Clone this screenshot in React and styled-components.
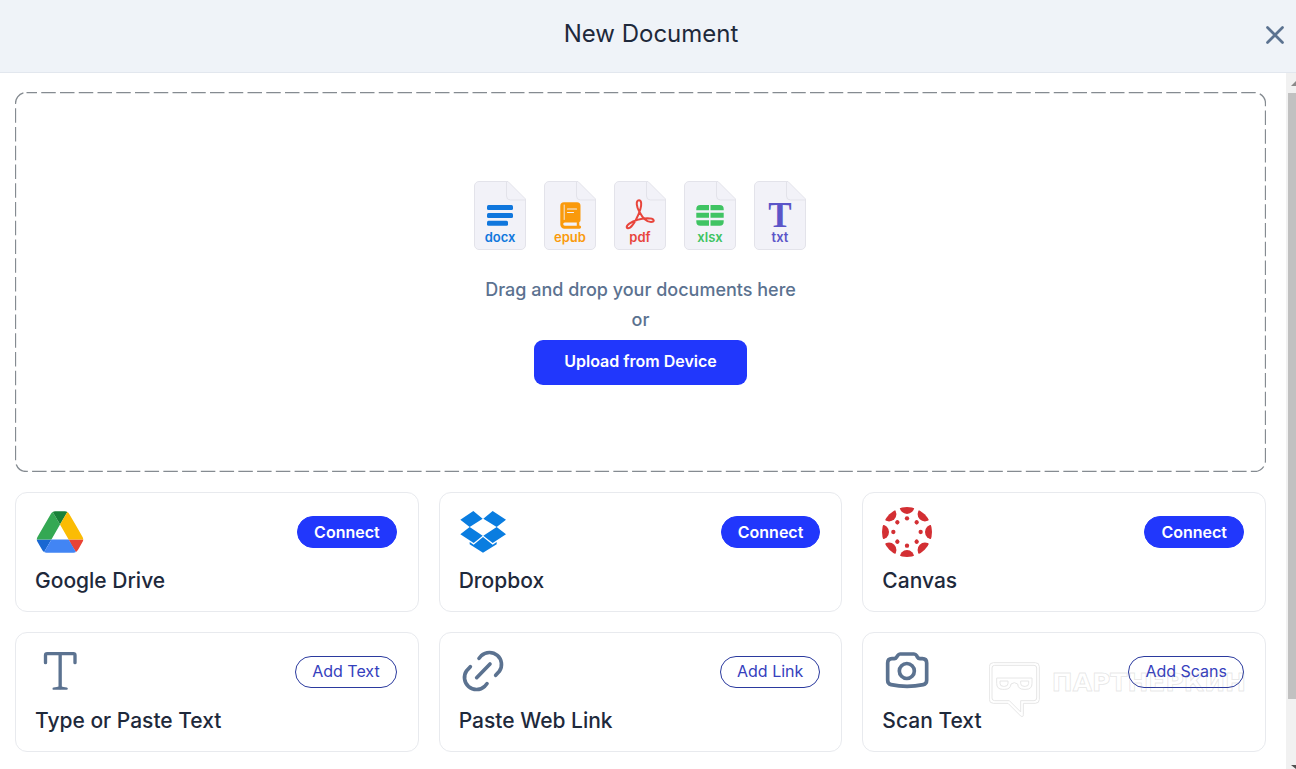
import React from 'react'
import styled, { createGlobalStyle } from 'styled-components';

const fileTypes = [
    { name: 'docx', color: '#1077dd', Glyph: DocxGlyph },
    { name: 'epub', color: '#fa9a0c', Glyph: EpubGlyph },
    { name: 'pdf', color: '#e8453c', Glyph: PdfGlyph },
    { name: 'xlsx', color: '#40c463', Glyph: XlsxGlyph },
    { name: 'txt', color: '#5b55c8', Glyph: TxtGlyph },
];

const sources = [
    { title: 'Google Drive', action: 'Connect', filled: true, Icon: DriveIcon },
    { title: 'Dropbox', action: 'Connect', filled: true, Icon: DropboxIcon },
    { title: 'Canvas', action: 'Connect', filled: true, Icon: CanvasIcon },
    { title: 'Type or Paste Text', action: 'Add Text', Icon: TypeIcon },
    { title: 'Paste Web Link', action: 'Add Link', Icon: LinkIcon },
    { title: 'Scan Text', action: 'Add Scans', Icon: CameraIcon },
];

function DocxGlyph() {
    return (
        <g fill="currentColor">
            <rect x="13" y="24" width="26" height="5" rx="1.5" />
            <rect x="13" y="32" width="26" height="5" rx="1.5" />
            <rect x="13" y="39.8" width="21" height="5" rx="1.5" />
        </g>
    )
}

function EpubGlyph() {
    return (
        <g>
            <path
                fill="currentColor"
                fillRule="evenodd"
                d="M20 21.3h13a3.5 3.5 0 0 1 3.5 3.5v14.4a2 2 0 0 1-1.2 1.9v3.4h.2a1.3 1.3 0 0 1 0 3.2H20.5a4.2 4.2 0 0 1-4.2-4.2V25a3.7 3.7 0 0 1 3.7-3.7zM20.8 41.5a1.6 1.6 0 0 0 0 3.2h12v-3.2z"
            />
            <path d="M20.200 24v14.500" stroke="#f2f1f8" strokeWidth="0.9" strokeLinecap="round" />
            <path d="M23.500 28h9M23.500 31.500h6" stroke="#f2f1f8" strokeWidth="1.2" strokeLinecap="round" />
        </g>
    )
}

function PdfGlyph() {
    return (
        <g transform="scale(0.3333) translate(-462 -33)">
            <path
                fill="none"
                stroke="currentColor"
                strokeWidth="6"
                strokeLinejoin="round"
                d="M537 91C526 91 530 112 538 125C546 140 560 156 573 156C586 156 585 145 562 145C545 146 520 153 508 161C496 169 499 179 510 173C522 164 536 135 541 118C545 104 545 91 537 91Z"
            />
        </g>
    )
}

function XlsxGlyph() {
    return (
        <g fill="currentColor">
            <path d="M16.3 24H25v5.3H12.3V28a4 4 0 0 1 4-4zM26.5 24h9.2a4 4 0 0 1 4 4v1.3H26.5z" />
            <path d="M12.3 31.8H25v5H12.3zM26.5 31.8h13.2v5H26.5z" />
            <path d="M12.3 39.3H25v5.4h-8.7a4 4 0 0 1-4-4zM26.5 39.3h13.2v1.4a4 4 0 0 1-4 4h-9.2z" />
        </g>
    )
}

function TxtGlyph() {
    return (
        <text x="26" y="46" textAnchor="middle" fill="currentColor" fontFamily="'Liberation Serif', serif" fontWeight="700" fontSize="35">T</text>
    )
}

function DriveIcon() {
    return (
        <svg width="50" height="50" viewBox="-3.4 -8 94 94" aria-hidden="true">
            <path fill="#1967d2" d="m6.6 66.85 3.85 6.65c.8 1.4 1.95 2.5 3.3 3.3l13.75-23.8H0c0 1.55.4 3.1 1.2 4.5z" />
            <path fill="#34a853" d="M43.65 25 29.9 1.2c-1.35.8-2.5 1.9-3.3 3.3l-25.4 44A9.06 9.06 0 0 0 0 53h27.5z" />
            <path fill="#ea4335" d="M73.55 76.8c1.35-.8 2.5-1.9 3.3-3.3l1.6-2.75L86.1 57.5c.8-1.4 1.2-2.95 1.2-4.5H59.8l5.85 11.5z" />
            <path fill="#188038" d="M43.65 25 57.4 1.2C56.05.4 54.5 0 52.9 0H34.4c-1.6 0-3.15.45-4.5 1.2z" />
            <path fill="#4285f4" d="M59.8 53H27.5L13.75 76.8c1.35.8 2.9 1.2 4.5 1.2h50.8c1.6 0 3.15-.45 4.5-1.2z" />
            <path fill="#fbbc04" d="m73.4 26.5-12.7-22c-.8-1.4-1.95-2.5-3.3-3.3L43.65 25 59.8 53h27.45c0-1.55-.4-3.1-1.2-4.5z" />
        </svg>
    )
}

function DropboxIcon() {
    return (
        <svg width="50" height="50" viewBox="87 81 150 150" aria-hidden="true">
            <path
                fill="#0a7de0"
                d="M130 93l28 23-39 25-28-22zM188 93l-28 23 40 25 28-22zM119 141l-28 22 40 26 27-22zM200 141l28 22-40 26-28-22zM159 171l-28 23-12-8v7l40 25 41-25v-7l-12 8z"
            />
        </svg>
    )
}

function CanvasIcon() {
    const spokes = [0, 45, 90, 135, 180, 225, 270, 315];
    return (
        <svg width="50" height="50" viewBox="-75 -75 150 150" fill="#d32f33" aria-hidden="true">
            <clipPath id="canvas-ring">
                <circle r="75" />
            </clipPath>
            <g clipPath="url(#canvas-ring)">
                {spokes.map((deg) => <circle key={deg} cy="-76" r="22" transform={`rotate(${deg})`} />)}
            </g>
            {spokes.map((deg) => <circle key={deg} cy="-41" r="6.5" transform={`rotate(${deg})`} />)}
        </svg>
    )
}

function TypeIcon() {
    return (
        <LineIcon viewBox="105 81 150 150" strokeWidth="10" aria-hidden="true">
            <path d="M136.5 128V106q0-5 5-5H220q5 0 5 5v22M180.5 101v102" />
            <path d="M161 206q10-1 19.5-4 9.5 3 19.5 4z" strokeWidth="7" />
        </LineIcon>
    )
}

function LinkIcon() {
    return (
        <LineIcon viewBox="87 81 150 150" strokeWidth="11" aria-hidden="true">
            <path d="M147 115l7-8a36 36 0 0 1 54 47l-11 12" />
            <path d="M171 191l-7 8a36 36 0 0 1-54-47l11-12" />
            <path d="M140 173l40-41" />
        </LineIcon>
    )
}

function CameraIcon() {
    return (
        <LineIcon viewBox="66 81 150 150" strokeWidth="11" aria-hidden="true">
            <path d="M120 102H162Q167 102 170 107L172 111Q175 116 180 116H187Q200 116 200 129V181Q200 192 190 194Q141 204 93 194Q83 192 83 181V129Q83 116 96 116H103Q107 116 110 111L113 107Q116 102 120 102Z" />
            <circle cx="140.5" cy="153" r="22.5" />
        </LineIcon>
    )
}

function FileIcon({ name, color, Glyph }) {
    return (
        <FileSheet viewBox="0 0 53 69" $color={color}>
            <path className="sheet" d="M5 .5H34L51.5 18V64a4.5 4.5 0 0 1-4.5 4.5H5A4.5 4.5 0 0 1 .5 64V5A4.5 4.5 0 0 1 5 .5z" />
            <path className="sheet" d="M32.5.5V15a4 4 0 0 0 4 4H51.5" />
            <Glyph />
            <text className="label" x="26" y="60.5" textAnchor="middle">{name}</text>
        </FileSheet>
    )
}

function Watermark() {
    return (
        <WatermarkStyled aria-hidden="true">
            <svg width="51" height="56" viewBox="387 126 153 168" fill="none" stroke="#e6e6e6" strokeWidth="3">
                <path d="M400 128H526Q538 128 538 140V238Q538 250 526 250H490V284Q490 293 482 288L444 250H400Q388 250 388 238V140Q388 128 400 128Z" />
                <path d="M404 136H522Q530 136 530 144V234Q530 242 522 242H482V276L448 242H404Q396 242 396 234V144Q396 136 404 136Z" />
                <path d="M410 174H516V190Q516 208 498 208H492Q474 208 473 192Q463 184 453 192Q452 208 434 208H428Q410 208 410 190Z" />
                <path d="M420 183H444V190Q444 199 434 199H430Q420 199 420 190ZM482 183H506V190Q506 199 496 199H492Q482 199 482 190Z" />
            </svg>
            <span>ПАРТНЕРКИН</span>
        </WatermarkStyled>
    )
}

function App() {
    return (
        <Page>
            <GlobalStyle />
            <Header>
                <h1>New Document</h1>
                <CloseButton type="button" aria-label="Close">
                    <svg width="20" height="20" viewBox="0 0 20 20" stroke="currentColor" strokeWidth="2.7" strokeLinecap="round">
                        <path d="M2.5 2.5l15 15M17.5 2.5l-15 15" />
                    </svg>
                </CloseButton>
            </Header>
            <Body>
                <Main>
                    <DropZone>
                        <svg className="outline" aria-hidden="true">
                            <rect x="0.5" y="0.5" rx="11" />
                        </svg>
                        <FileRow>
                            {fileTypes.map((type) => <FileIcon key={type.name} {...type} />)}
                        </FileRow>
                        <p>Drag and drop your documents here</p>
                        <p>or</p>
                        <UploadButton type="button">Upload from Device</UploadButton>
                    </DropZone>
                    <SourceGrid>
                        {sources.map(({ title, action, filled, Icon }) => (
                            <SourceCard key={title}>
                                <div className="top">
                                    <Icon />
                                    <PillButton type="button" $filled={filled}>{action}</PillButton>
                                </div>
                                <h2>{title}</h2>
                            </SourceCard>
                        ))}
                        <Watermark />
                    </SourceGrid>
                </Main>
                <ScrollTrack aria-hidden="true">
                    <svg width="5" height="20" viewBox="0 0 5 20" fill="#8a8a8a">
                        <path d="M0 13l5-5v5z" />
                    </svg>
                    <div className="thumb" />
                    <svg className="down" width="5" height="4" viewBox="0 0 5 4" fill="#505050">
                        <path d="M0 0h5v4z" />
                    </svg>
                </ScrollTrack>
            </Body>
        </Page>
    )
}

const GlobalStyle = createGlobalStyle`
    *{
        box-sizing: border-box;
        margin: 0;
        padding: 0;
    }
    :root{
        --primary-color: #2137fc;
        --outline-color: #2b3a9e;
        --title-color: #1e293b;
        --muted-color: #5b7290;
        --border-color: #e8eaee;
        --header-color: #eff3f8;
    }
    body{
        background-color: white;
        color: var(--title-color);
        font-family: Inter, 'Liberation Sans', sans-serif;
    }
    button{
        font-family: inherit;
        cursor: pointer;
    }
`;

const Page = styled.div`
    display: flex;
    flex-direction: column;
    min-height: 100vh;
`;

const Header = styled.header`
    display: grid;
    grid-template-columns: 1fr auto 1fr;
    align-items: center;
    padding: 14px 4px 18px 10px;
    background-color: var(--header-color);
    border-bottom: 1px solid #e2e7ee;
    h1{
        grid-column: 2;
        font-size: 24px;
        font-weight: 400;
        line-height: 40px;
    }
`;

const CloseButton = styled.button`
    display: flex;
    justify-self: end;
    padding: 8px 7px 6px;
    border: none;
    background: none;
    color: var(--muted-color);
`;

const Body = styled.div`
    display: flex;
    flex: 1;
`;

const Main = styled.main`
    display: flex;
    flex-direction: column;
    gap: 20px;
    flex: 1;
    padding: 19px 20px 17px 15px;
`;

const DropZone = styled.section`
    position: relative;
    display: flex;
    flex-direction: column;
    align-items: center;
    padding: 89px 20px 87px;
    .outline{
        position: absolute;
        inset: 0;
        width: 100%;
        height: 100%;
        pointer-events: none;
        rect{
            width: calc(100% - 1px);
            height: calc(100% - 1px);
            fill: none;
            stroke: #858b91;
            stroke-width: 1.3;
            stroke-dasharray: 14.5 4.25;
            stroke-dashoffset: 4;
        }
    }
    p{
        color: var(--muted-color);
        font-size: 18px;
        font-weight: 500;
        line-height: 30px;
    }
`;

const FileRow = styled.div`
    display: flex;
    gap: 17px;
    margin-bottom: 25px;
`;

const FileSheet = styled.svg`
    width: 53px;
    height: 69px;
    color: ${(props) => props.$color};
    .sheet{
        fill: #f2f2f8;
        stroke: #e3e3ea;
    }
    .label{
        fill: currentColor;
        font-size: 13px;
        font-weight: 600;
    }
`;

const UploadButton = styled.button`
    margin-top: 5px;
    padding: 10px 30px 13px;
    border: none;
    border-radius: 9px;
    background-color: var(--primary-color);
    color: white;
    font-size: 16px;
    font-weight: 600;
    line-height: 22px;
`;

const SourceGrid = styled.section`
    position: relative;
    display: grid;
    grid-template-columns: repeat(3, 1fr);
    gap: 20px;
`;

const SourceCard = styled.article`
    padding: 14px 21px 15px 19px;
    border: 1px solid var(--border-color);
    border-radius: 12px;
    .top{
        display: flex;
        justify-content: space-between;
        align-items: center;
    }
    h2{
        margin-top: 9px;
        font-size: 21px;
        font-weight: 500;
        line-height: 30px;
    }
`;

const PillButton = styled.button`
    padding: ${(props) => props.$filled ? '4px 16px' : '3px 16px 5px'};
    border: 1px solid ${(props) => props.$filled ? 'var(--primary-color)' : 'var(--outline-color)'};
    border-radius: 16px;
    background-color: ${(props) => props.$filled ? 'var(--primary-color)' : 'white'};
    color: ${(props) => props.$filled ? 'white' : '#3540bd'};
    font-size: 16px;
    font-weight: ${(props) => props.$filled ? 600 : 400};
    line-height: 22px;
`;

const LineIcon = styled.svg`
    width: 50px;
    height: 50px;
    fill: none;
    stroke: var(--muted-color);
    stroke-linecap: round;
    stroke-linejoin: round;
`;

const WatermarkStyled = styled.div`
    position: absolute;
    right: 20px;
    bottom: 34px;
    display: flex;
    gap: 12px;
    pointer-events: none;
    span{
        color: transparent;
        font-family: 'DejaVu Sans', sans-serif;
        font-size: 25px;
        font-weight: 700;
        line-height: 42px;
        -webkit-text-stroke: 1px rgba(120, 120, 120, 0.18);
    }
`;

const ScrollTrack = styled.div`
    display: flex;
    flex-direction: column;
    align-items: flex-end;
    width: 10px;
    background-color: #f1f1f1;
    .thumb{
        width: 8px;
        height: 87%;
        background-color: #c1c1c1;
    }
    .down{
        margin-top: auto;
    }
`;

export default App;
